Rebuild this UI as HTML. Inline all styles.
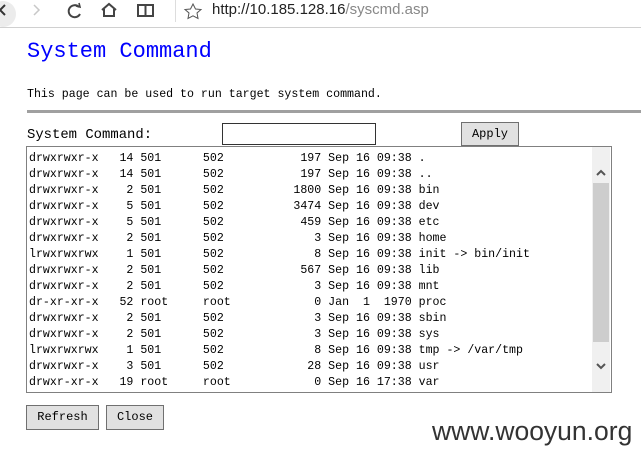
<!DOCTYPE html>
<html><head><meta charset="utf-8"><style>
*{margin:0;padding:0;box-sizing:border-box}
body{width:641px;height:460px;background:#fff;position:relative;overflow:hidden;font-family:"Liberation Mono",monospace}
.a{position:absolute}
.bar{left:0;top:0;width:641px;height:28px;background:#fff;border-bottom:1px solid #d0d0d0}
.mono{font-family:"Liberation Mono",monospace;white-space:pre;color:#000}
.btn{background:#e1e1e1;border:1px solid #adadad;font-family:"Liberation Mono",monospace;font-size:12px;text-align:center;color:#000}
</style></head><body>
<div class="a bar"></div>
<div class="a" style="left:-10px;top:1px;width:26px;height:26px;border-radius:50%;background:#ececec"></div>
<svg class="a" style="left:0;top:0" width="220" height="28">
<path d="M5 5 L0 10 L5 15" stroke="#333" stroke-width="2" fill="none"/>
<path d="M34 5 L39 10 L34 15" stroke="#c8c8c8" stroke-width="1.5" fill="none"/>
<path d="M79 7 A6 6 0 1 0 80 14" stroke="#444" stroke-width="2" fill="none"/>
<path d="M76 6 L80 7 L79 3" stroke="#444" stroke-width="1.6" fill="none"/>
<path d="M102 10 L109 4 L116 10 M104 9 V16 H114 V9" stroke="#444" stroke-width="2" fill="none"/>
<path d="M138 5 H153 V16 H138 Z M145.5 5 V16" stroke="#444" stroke-width="2" fill="none"/>
<line x1="175.5" y1="0" x2="175.5" y2="22" stroke="#ddd"/>
<path d="M193 4 L195.5 9 L201 9.5 L197 13 L198 18.5 L193 15.8 L188 18.5 L189 13 L185 9.5 L190.5 9 Z" stroke="#555" stroke-width="1" fill="none"/>
</svg>
<div class="a" style="left:212px;top:1px;font-family:'Liberation Sans',sans-serif;font-size:15px;color:#222;white-space:pre">http://10.185.128.16<span style="color:#888">/syscmd.asp</span></div>
<div class="a mono" style="left:27px;top:39px;font-size:22px;color:#0000ff">System Command</div>
<div class="a mono" style="left:27px;top:88px;font-size:11.6px">This page can be used to run target system command.</div>
<div class="a" style="left:27px;top:110px;width:614px;height:3px;background:#a0a0a0"></div>
<div class="a mono" style="left:27px;top:127px;font-size:13.9px">System Command:</div>
<div class="a" style="left:222px;top:123px;width:154px;height:22px;border:1px solid #333"></div>
<div class="a btn" style="left:461px;top:122px;width:58px;height:24px;line-height:22px;border-color:#707070">Apply</div>
<div class="a" style="left:26px;top:146px;width:586px;height:247px;border:1px solid #808080"></div>
<div class="a" style="left:592px;top:147px;width:18px;height:245px;background:#f0f0f0"></div>
<div class="a" style="left:593px;top:183px;width:16px;height:159px;background:#cdcdcd"></div>
<svg class="a" style="left:592px;top:160px" width="18" height="220">
<path d="M5 15 L9 11 L13 15" stroke="#555" stroke-width="2" fill="none"/>
<path d="M5 204 L9 208 L13 204" stroke="#555" stroke-width="2" fill="none"/>
</svg>
<div class="a mono" style="left:29px;top:151px;font-size:11.6px;line-height:16px">drwxrwxr-x   14 501      502           197 Sep 16 09:38 .
drwxrwxr-x   14 501      502           197 Sep 16 09:38 ..
drwxrwxr-x    2 501      502          1800 Sep 16 09:38 bin
drwxrwxr-x    5 501      502          3474 Sep 16 09:38 dev
drwxrwxr-x    5 501      502           459 Sep 16 09:38 etc
drwxrwxr-x    2 501      502             3 Sep 16 09:38 home
lrwxrwxrwx    1 501      502             8 Sep 16 09:38 init -&gt; bin/init
drwxrwxr-x    2 501      502           567 Sep 16 09:38 lib
drwxrwxr-x    2 501      502             3 Sep 16 09:38 mnt
dr-xr-xr-x   52 root     root            0 Jan  1  1970 proc
drwxrwxr-x    2 501      502             3 Sep 16 09:38 sbin
drwxrwxr-x    2 501      502             3 Sep 16 09:38 sys
lrwxrwxrwx    1 501      502             8 Sep 16 09:38 tmp -&gt; /var/tmp
drwxrwxr-x    3 501      502            28 Sep 16 09:38 usr
drwxr-xr-x   19 root     root            0 Sep 16 17:38 var</div>
<div class="a btn" style="left:26px;top:405px;width:73px;height:25px;line-height:23px;border-color:#707070">Refresh</div>
<div class="a btn" style="left:106px;top:405px;width:58px;height:25px;line-height:23px;border-color:#707070">Close</div>
<div class="a" style="left:432px;top:416px;font-family:'Liberation Sans',sans-serif;font-size:26.5px;color:#333">www.wooyun.org</div>
</body></html>
